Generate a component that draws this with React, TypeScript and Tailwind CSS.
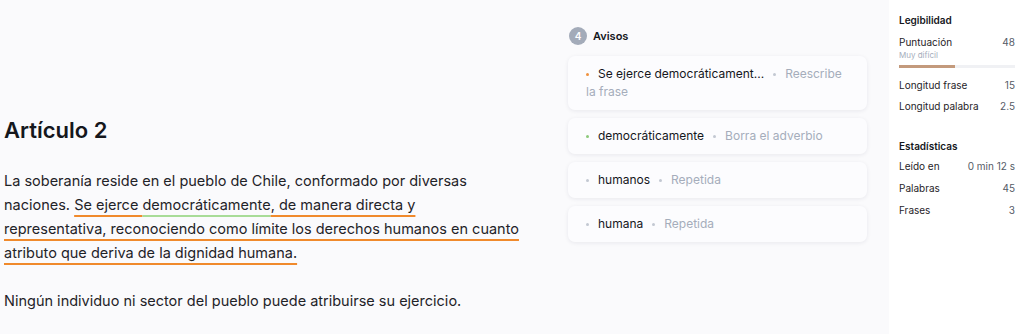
import React from "react";

const font = { fontFamily: "Inter, 'Noto Sans', sans-serif" };

type Aviso = { dot: string; text: string; hint: string };

const avisos: Aviso[] = [
  { dot: "bg-[#f0923e]", text: "Se ejerce democráticament...", hint: "Reescribe la frase" },
  { dot: "bg-[#8cc97a]", text: "democráticamente", hint: "Borra el adverbio" },
  { dot: "bg-[#c3c8d2]", text: "humanos", hint: "Repetida" },
  { dot: "bg-[#c3c8d2]", text: "humana", hint: "Repetida" },
];

function Row({ label, value }: { label: string; value: string }) {
  return (
    <div className="flex justify-between text-[10px] text-[#1f2328] leading-[14px]">
      <span>{label}</span>
      <span className="text-[#555b66]">{value}</span>
    </div>
  );
}

export default function App() {
  const orange = "underline decoration-[#f08a2c] decoration-2 underline-offset-[5px] [text-decoration-skip-ink:none]";
  const green = "underline decoration-[#a8dc98] decoration-2 underline-offset-[5px] [text-decoration-skip-ink:none]";
  return (
    <div className="flex h-[334px] w-[1024px] overflow-hidden bg-[#fafafc]" style={font}>
      <div className="w-[568px] shrink-0 pl-[4px] pt-[116px] text-[#1f2328]">
        <h1 className="text-[22px] font-semibold leading-[28px] text-[#15171c]">Artículo 2</h1>
        <p className="mt-[25px] whitespace-nowrap text-[14.5px] leading-[24px]">
          La soberanía reside en el pueblo de Chile, conformado por diversas
          <br />
          naciones.{" "}
          <span className={orange}>Se ejerce </span>
          <span className={green}>democráticamente</span>
          <span className={orange}>
            , de manera directa y
            <br />
            representativa, reconociendo como límite los derechos humanos en cuanto
            <br />
            atributo que deriva de la dignidad humana.
          </span>
        </p>
        <p className="mt-[24px] text-[14.5px] leading-[24px]">
          Ningún individuo ni sector del pueblo puede atribuirse su ejercicio.
        </p>
      </div>

      <div className="w-[299px] shrink-0 pt-[27px]">
        <div className="flex items-center gap-[6px] pl-[1px]">
          <span className="flex h-[18px] w-[18px] items-center justify-center rounded-full bg-[#a3abb9] text-[10px] font-semibold text-white">
            4
          </span>
          <span className="text-[11px] font-semibold text-[#15171c]">Avisos</span>
        </div>
        <div className="mt-[11px] flex flex-col gap-[8px]">
          {avisos.map((a) => (
            <div
              key={a.text}
              className="rounded-[7px] bg-[#fcfcfe] px-[18px] py-[9px] text-[12px] leading-[18px] shadow-[0_1px_4px_rgba(20,30,60,0.08)]"
            >
              <span className={`mr-[9px] inline-block h-[3px] w-[3px] rounded-full align-middle ${a.dot}`} />
              <span className="text-[#15171c]">{a.text}</span>
              <span className="mx-[9px] inline-block h-[3px] w-[3px] rounded-full bg-[#c3c8d2] align-middle" />
              <span className="text-[#a5adbb]">{a.hint}</span>
            </div>
          ))}
        </div>
      </div>

      <div className="ml-auto w-[135px] shrink-0 bg-white pl-[10px] pr-[9px] pt-[13px]">
        <div className="text-[10px] font-semibold leading-[14px] text-[#15171c]">Legibilidad</div>
        <div className="mt-[8px]">
          <Row label="Puntuación" value="48" />
        </div>
        <div className="mt-[1px] text-[8px] leading-[10px] text-[#a5adbb]">Muy difícil</div>
        <div className="mt-[5px] h-[3px] w-full bg-[#f0f1f4]">
          <div className="h-full bg-[#c39a7c]" style={{ width: "48%" }} />
        </div>
        <div className="mt-[10px] flex flex-col gap-[7px]">
          <Row label="Longitud frase" value="15" />
          <Row label="Longitud palabra" value="2.5" />
        </div>
        <div className="mt-[26px] text-[10px] font-semibold leading-[14px] text-[#15171c]">Estadísticas</div>
        <div className="mt-[6px] flex flex-col gap-[8px]">
          <Row label="Leído en" value="0 min 12 s" />
          <Row label="Palabras" value="45" />
          <Row label="Frases" value="3" />
        </div>
      </div>
    </div>
  );
}
